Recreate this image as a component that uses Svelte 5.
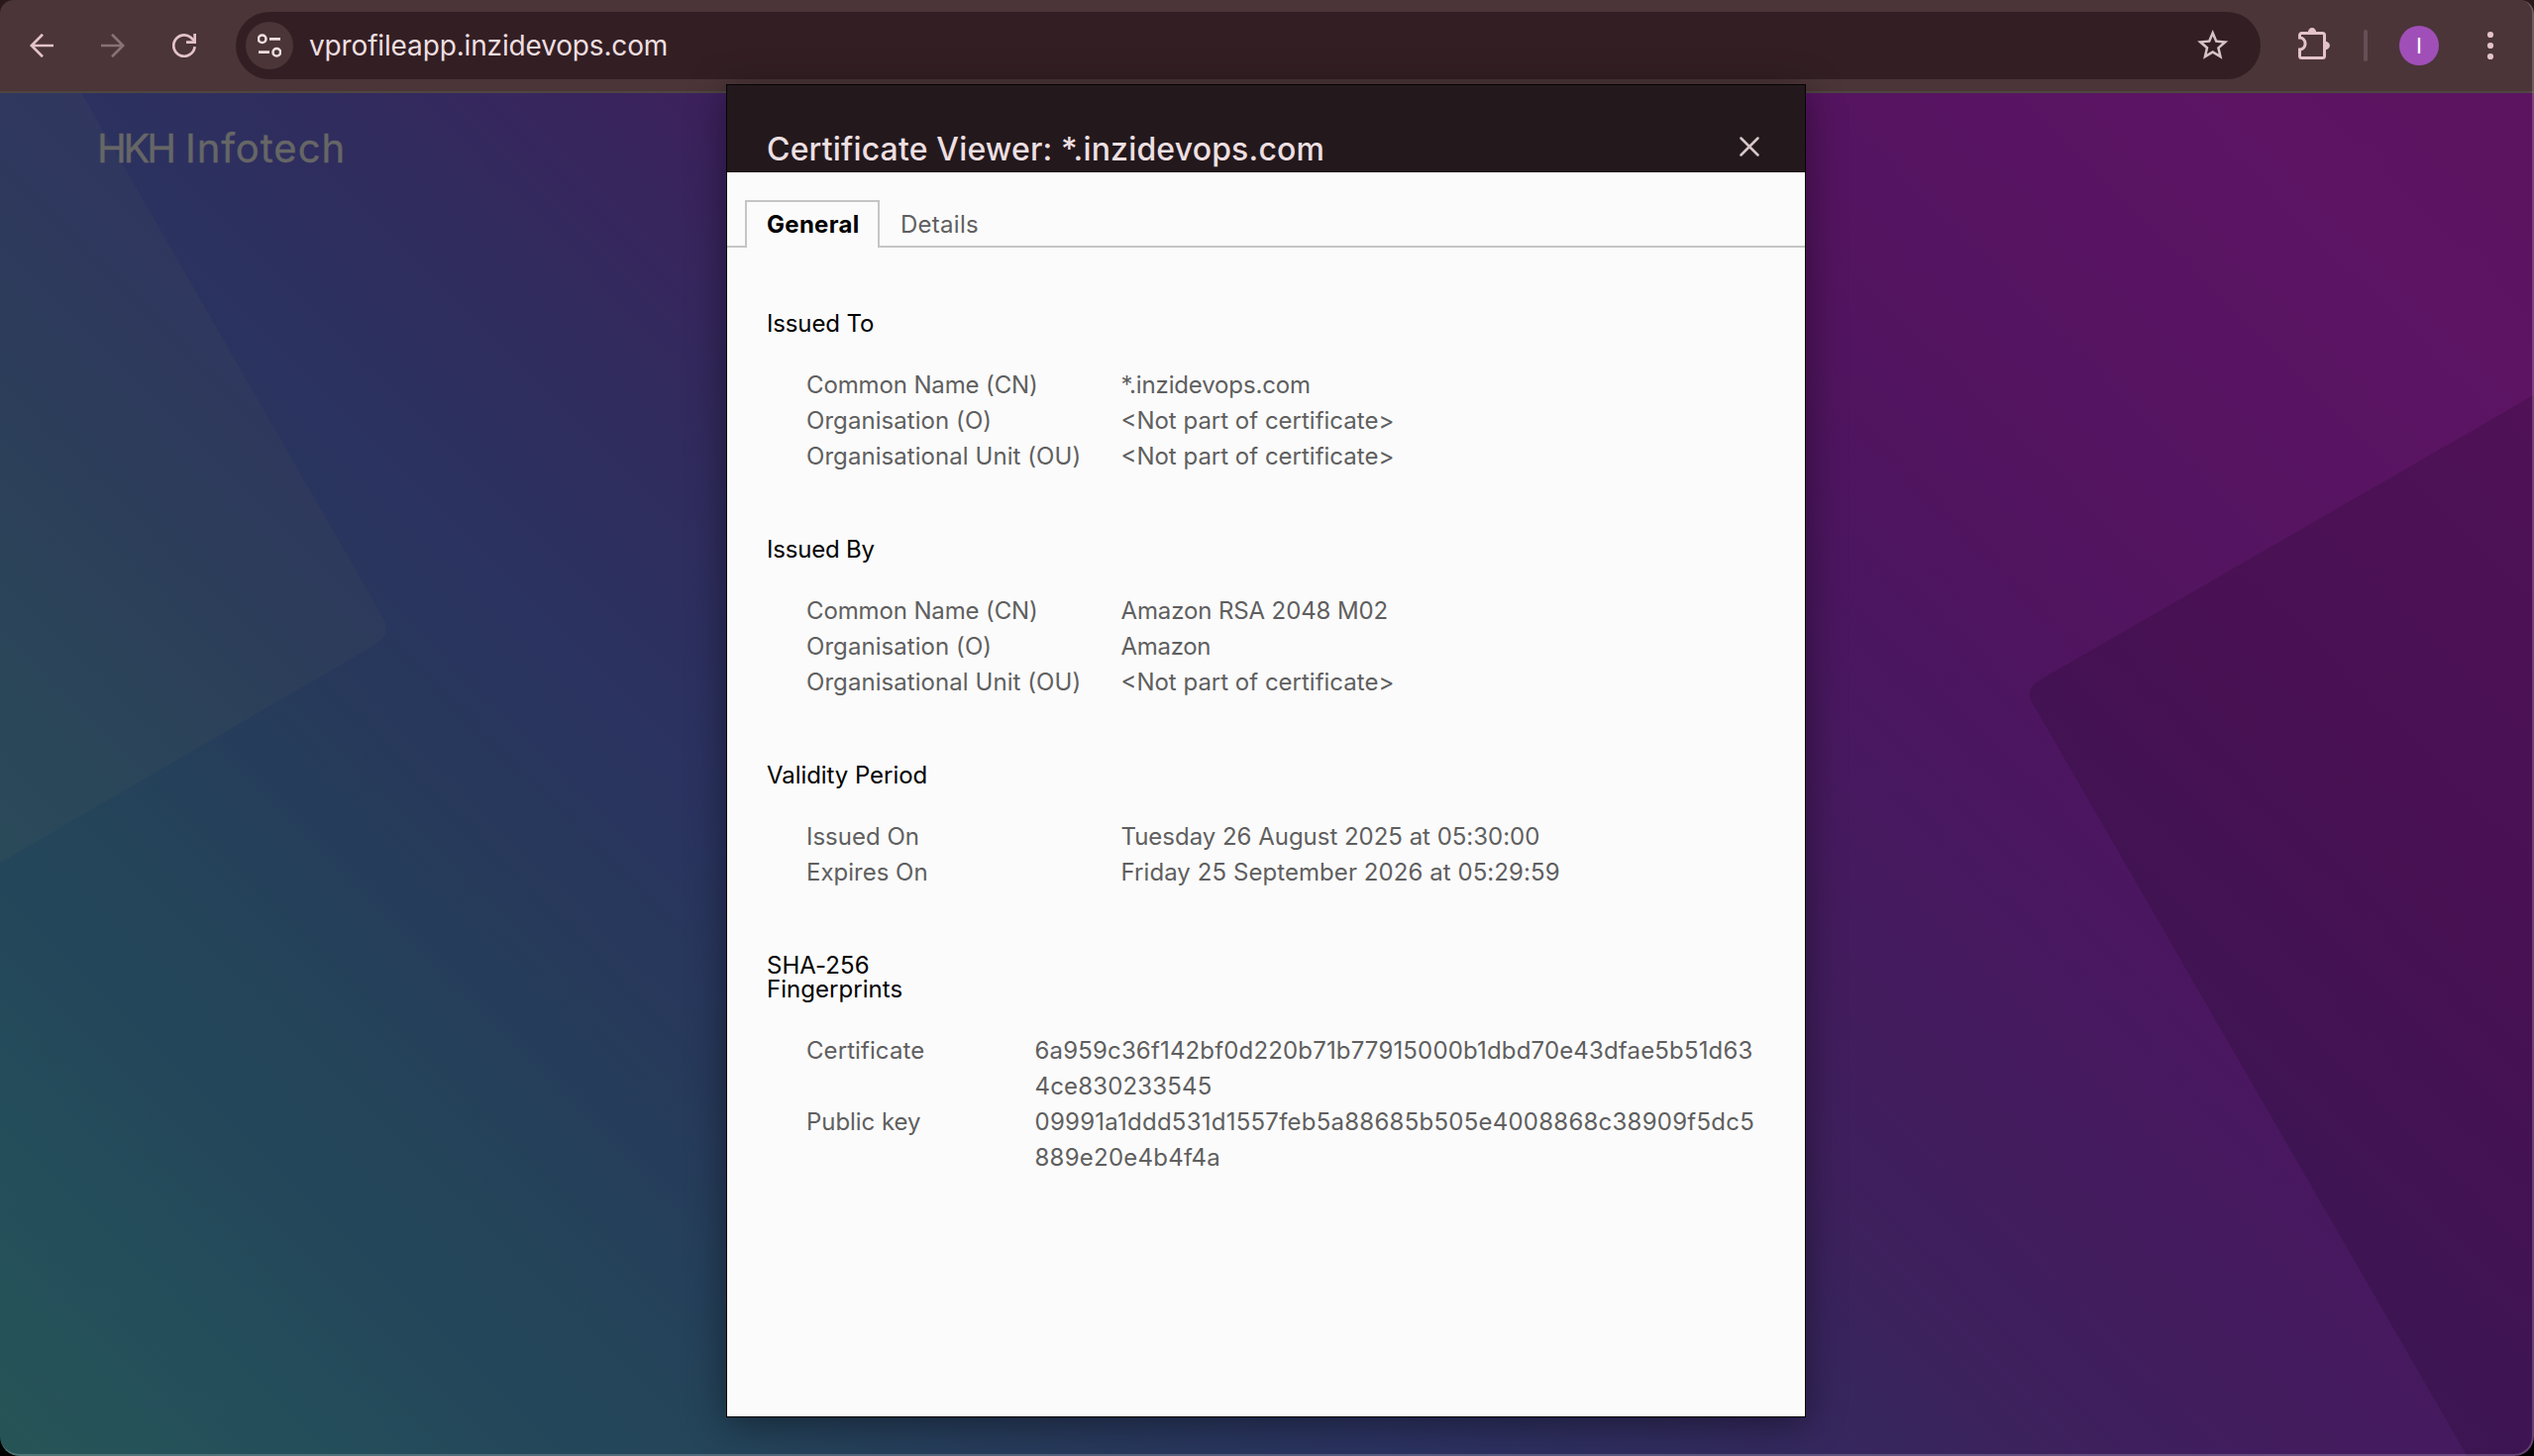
<script>
  const NONE = '<Not part of certificate>';

  // `ls` is the letter-spacing, in px, of a label or a value.
  const sections = [
    {
      title: 'Issued To',
      ls: -0.14,
      rows: [
        { label: 'Common Name (CN)', labelLs: -0.13, value: ['*.inzidevops.com'], ls: -0.15 },
        { label: 'Organisation (O)', labelLs: 0.06, value: [NONE], ls: 0 },
        { label: 'Organisational Unit (OU)', labelLs: 0.06, value: [NONE], ls: 0 }
      ]
    },
    {
      title: 'Issued By',
      ls: -0.2,
      rows: [
        { label: 'Common Name (CN)', labelLs: -0.13, value: ['Amazon RSA 2048 M02'], ls: -0.12 },
        { label: 'Organisation (O)', labelLs: 0.06, value: ['Amazon'], ls: -0.3 },
        { label: 'Organisational Unit (OU)', labelLs: 0.06, value: [NONE], ls: 0 }
      ]
    },
    {
      title: 'Validity Period',
      ls: -0.06,
      rows: [
        { label: 'Issued On', labelLs: 0, value: ['Tuesday 26 August 2025 at 05:30:00'], ls: -0.02 },
        { label: 'Expires On', labelLs: 0, value: ['Friday 25 September 2026 at 05:29:59'], ls: 0.07 }
      ]
    },
    {
      title: 'SHA-256 Fingerprints',
      ls: 0.04,
      wide: true,
      rows: [
        {
          label: 'Certificate',
          labelLs: 0.08,
          value: ['6a959c36f142bf0d220b71b77915000b1dbd70e43dfae5b51d63', '4ce830233545'],
          ls: 0.16
        },
        {
          label: 'Public key',
          labelLs: -0.05,
          value: ['09991a1ddd531d1557feb5a88685b505e4008868c38909f5dc5', '889e20e4b4f4a'],
          ls: 0.24
        }
      ]
    }
  ];
</script>

<div class="window">
  <header class="toolbar">
    <nav class="nav">
      <svg class="pink" width="24" height="24" viewBox="0 0 24 24" fill="none">
        <path d="M24 12H2M13 .8 1.8 12 13 23.2" stroke="currentColor" stroke-width="2.7" />
      </svg>
      <svg class="dim" width="24" height="24" viewBox="0 0 24 24" fill="none">
        <path d="M0 12h22M11 .8 22.2 12 11 23.2" stroke="currentColor" stroke-width="2.7" />
      </svg>
      <svg class="pink" width="24" height="24" viewBox="0 0 24 24" fill="none" stroke="currentColor" stroke-width="2.7">
        <path d="M22.6 13.2A10.7 10.7 0 1 1 18.6 3.7L22.3 7.4" />
        <path d="M22.65 0V8.6H14" />
      </svg>
    </nav>

    <div class="omnibox">
      <span class="site">
        <svg width="24" height="24" viewBox="0 0 24 24" fill="none" stroke="currentColor">
          <circle cx="4.7" cy="5.3" r="3.8" stroke-width="2.5" />
          <path d="M12 5.3h11M1 18.7h11" stroke-width="2.8" />
          <circle cx="19.3" cy="18.7" r="3.8" stroke-width="2.5" />
        </svg>
      </span>
      <span class="url">vprofileapp.inzidevops.com</span>
      <svg class="star" width="37.4" height="37.4" viewBox="0 0 24 24" fill="currentColor">
        <path d="M22 9.24l-7.19-.62L12 2 9.19 8.63 2 9.24l5.46 4.73L5.82 21 12 17.27 18.18 21l-1.63-7.03L22 9.24zM12 15.4l-3.76 2.27 1-4.28-3.32-2.88 4.38-.38L12 6.1l1.71 4.04 4.38.38-3.32 2.88 1 4.28L12 15.4z" />
      </svg>
    </div>

    <svg class="pink puzzle" width="32" height="32" viewBox="0 0 32 32" fill="none">
      <path
        d="M3.5 5.5h21a2 2 0 0 1 2 2v21a2 2 0 0 1-2 2h-21a2 2 0 0 1-2-2V22a5.6 6 0 0 0 0-12V7.5a2 2 0 0 1 2-2z"
        stroke="currentColor"
        stroke-width="3"
      />
      <path d="M9.8 5a4.2 4.9 0 0 1 8.4 0zM27 13.8a4.9 4.2 0 0 1 0 8.4z" fill="currentColor" />
    </svg>
    <span class="divider"></span>
    <span class="avatar">I</span>
    <svg class="pink" width="12" height="32" viewBox="0 0 12 32" fill="currentColor">
      <circle cx="6" cy="5" r="3.1" />
      <circle cx="6" cy="16" r="3.1" />
      <circle cx="6" cy="27" r="3.1" />
    </svg>
  </header>

  <main class="page">
    <svg class="shapes" width="2558" height="1376" viewBox="0 94 2558 1376">
      <path class="light" d="M-10 86 78 86 387 624q9 15-8 27L-10 877z" />
      <path class="dark" d="M2568 393 2060 686q-18 10-7 26L2495 1478H2568z" />
    </svg>
    <span class="brand"><span class="initials">HKH</span> Infotech</span>
  </main>

  <section class="dialog">
    <div class="head">
      <h1>Certificate Viewer: *.inzidevops.com</h1>
      <svg class="close" width="20" height="20" viewBox="0 0 20 20" fill="none">
        <path d="M1.5 1.5l17 17M18.5 1.5l-17 17" stroke="currentColor" stroke-width="2.5" stroke-linecap="round" />
      </svg>
    </div>

    <div class="tabs">
      <span class="tab active">General</span>
      <span class="tab">Details</span>
      <span class="rest"></span>
    </div>

    <div class="body">
      {#each sections as section}
        <section>
          <h2 style:letter-spacing="{section.ls}px">{section.title}</h2>
          <dl class:wide={section.wide}>
            {#each section.rows as row}
              <dt style:letter-spacing="{row.labelLs}px">{row.label}</dt>
              <dd style:letter-spacing="{row.ls}px">
                {#each row.value as line}<span>{line}</span>{/each}
              </dd>
            {/each}
          </dl>
        </section>
      {/each}
    </div>
  </section>

  <div class="edge"></div>
</div>

<style>
  :global(body) {
    background: linear-gradient(#2a191c 50%, #000 50%);
    overflow: hidden;
  }

  .window {
    position: relative;
    width: 2558px;
    height: 1470px;
    border-radius: 14px 14px 20px 20px;
    overflow: hidden;
    font-family: Inter, 'Liberation Sans', sans-serif;
    display: flex;
    flex-direction: column;
  }

  .toolbar {
    box-sizing: border-box;
    height: 94px;
    padding: 0 38px 0 30px;
    display: flex;
    align-items: center;
    background: #4b3538;
    border-bottom: 2px solid #4f4541;
  }

  .nav {
    display: flex;
    gap: 48px;
    margin-right: 40px;
  }

  svg {
    display: block;
    flex: none;
  }

  .pink {
    color: #e3c3c9;
  }

  .dim {
    color: #8a7175;
  }

  .omnibox {
    box-sizing: border-box;
    flex: 1;
    height: 68px;
    padding: 0 30px 0 10px;
    border-radius: 34px;
    background: #331f23;
    display: flex;
    align-items: center;
  }

  .site {
    width: 48px;
    height: 48px;
    border-radius: 50%;
    background: #4b3538;
    color: #efdfe1;
    display: flex;
    align-items: center;
    justify-content: center;
    margin-right: 16px;
  }

  .url {
    flex: 1;
    font-size: 28px;
    line-height: 34px;
    letter-spacing: -0.15px;
    color: #efdfe1;
  }

  .star {
    color: #d5c4c7;
    margin-bottom: 1px;
  }

  .puzzle {
    margin: 0 34px 4px 38px;
  }

  .divider {
    width: 4px;
    height: 32px;
    border-radius: 2px;
    background: #675055;
    margin-right: 32px;
  }

  .avatar {
    width: 40px;
    height: 40px;
    border-radius: 50%;
    background: #a04fb8;
    color: #fff;
    font-size: 22px;
    line-height: 40px;
    text-align: center;
    margin-right: 46px;
  }

  .page {
    position: relative;
    flex: 1;
    background: linear-gradient(
      45deg,
      #265455 0%,
      #25515a 5%,
      #244c5b 10%,
      #24475a 14%,
      #24445a 19%,
      #27395b 28%,
      #2b3260 36%,
      #302c5e 43%,
      #3e205d 54%,
      #4b1660 69%,
      #51145f 75%,
      #5c1463 92%,
      #5c1460 100%
    );
  }

  .shapes {
    position: absolute;
    inset: 0;
  }

  .light {
    fill: rgba(110, 110, 84, 0.08);
  }

  .dark {
    fill: rgba(0, 0, 0, 0.13);
  }

  .brand {
    position: relative;
    display: block;
    padding: 31px 0 0 98px;
    font-size: 40px;
    line-height: 50px;
    letter-spacing: 0.95px;
    color: #666;
    -webkit-text-stroke: 0.4px #666;
  }

  .initials {
    letter-spacing: -3.2px;
  }

  .dialog {
    position: absolute;
    left: 733px;
    top: 85px;
    width: 1088px;
    height: 1344px;
    border: 1px solid #050304;
    background: #fbfbfb;
    box-shadow: 0 6px 36px rgba(0, 0, 0, 0.42);
    display: flex;
    flex-direction: column;
  }

  .head {
    box-sizing: border-box;
    height: 88px;
    padding: 45px 46px 0 40px;
    background: #23191c;
    display: flex;
    justify-content: space-between;
  }

  h1 {
    margin: 0;
    font-size: 32px;
    font-weight: 500;
    line-height: 40px;
    letter-spacing: 0.17px;
    color: #eddfe1;
  }

  .close {
    color: #d6c6c9;
    margin-top: 7px;
  }

  .tabs {
    display: flex;
    padding-top: 28px;
    font-size: 24px;
    line-height: 30px;
  }

  .tabs::before {
    content: '';
    width: 18px;
    border-bottom: 2px solid #c5c5c5;
  }

  .tab {
    box-sizing: border-box;
    height: 48px;
    padding: 10px 20px 0 21px;
    border-bottom: 2px solid #c5c5c5;
    color: #5f5f5f;
    letter-spacing: 0.27px;
  }

  .tab.active {
    width: 136px;
    padding: 8px 0 0 20px;
    border: 2px solid #c5c5c5;
    border-bottom: 0;
    color: #000;
    font-weight: 700;
    letter-spacing: 0.29px;
  }

  .rest {
    flex: 1;
    border-bottom: 2px solid #c5c5c5;
  }

  .body {
    padding: 65px 40px 0;
    display: flex;
    flex-direction: column;
    gap: 64px;
    font-size: 24px;
  }

  h2 {
    margin: 0 0 32px;
    width: 180px;
    font-size: 24px;
    font-weight: 400;
    line-height: 24px;
    color: #000;
  }

  dl {
    margin: 0 0 0 40px;
    display: grid;
    grid-template-columns: 317.5px 1fr;
    line-height: 36px;
    color: #5f5f5f;
  }

  dl.wide {
    grid-template-columns: 230.5px 1fr;
  }

  dt,
  dd {
    margin: 0;
    white-space: nowrap;
  }

  dd span {
    display: block;
  }

  .edge {
    position: absolute;
    inset: 0;
    border: solid rgba(255, 255, 255, 0.2);
    border-width: 0 2px 2px 0;
    border-radius: 14px 14px 20px 20px;
    pointer-events: none;
  }
</style>
